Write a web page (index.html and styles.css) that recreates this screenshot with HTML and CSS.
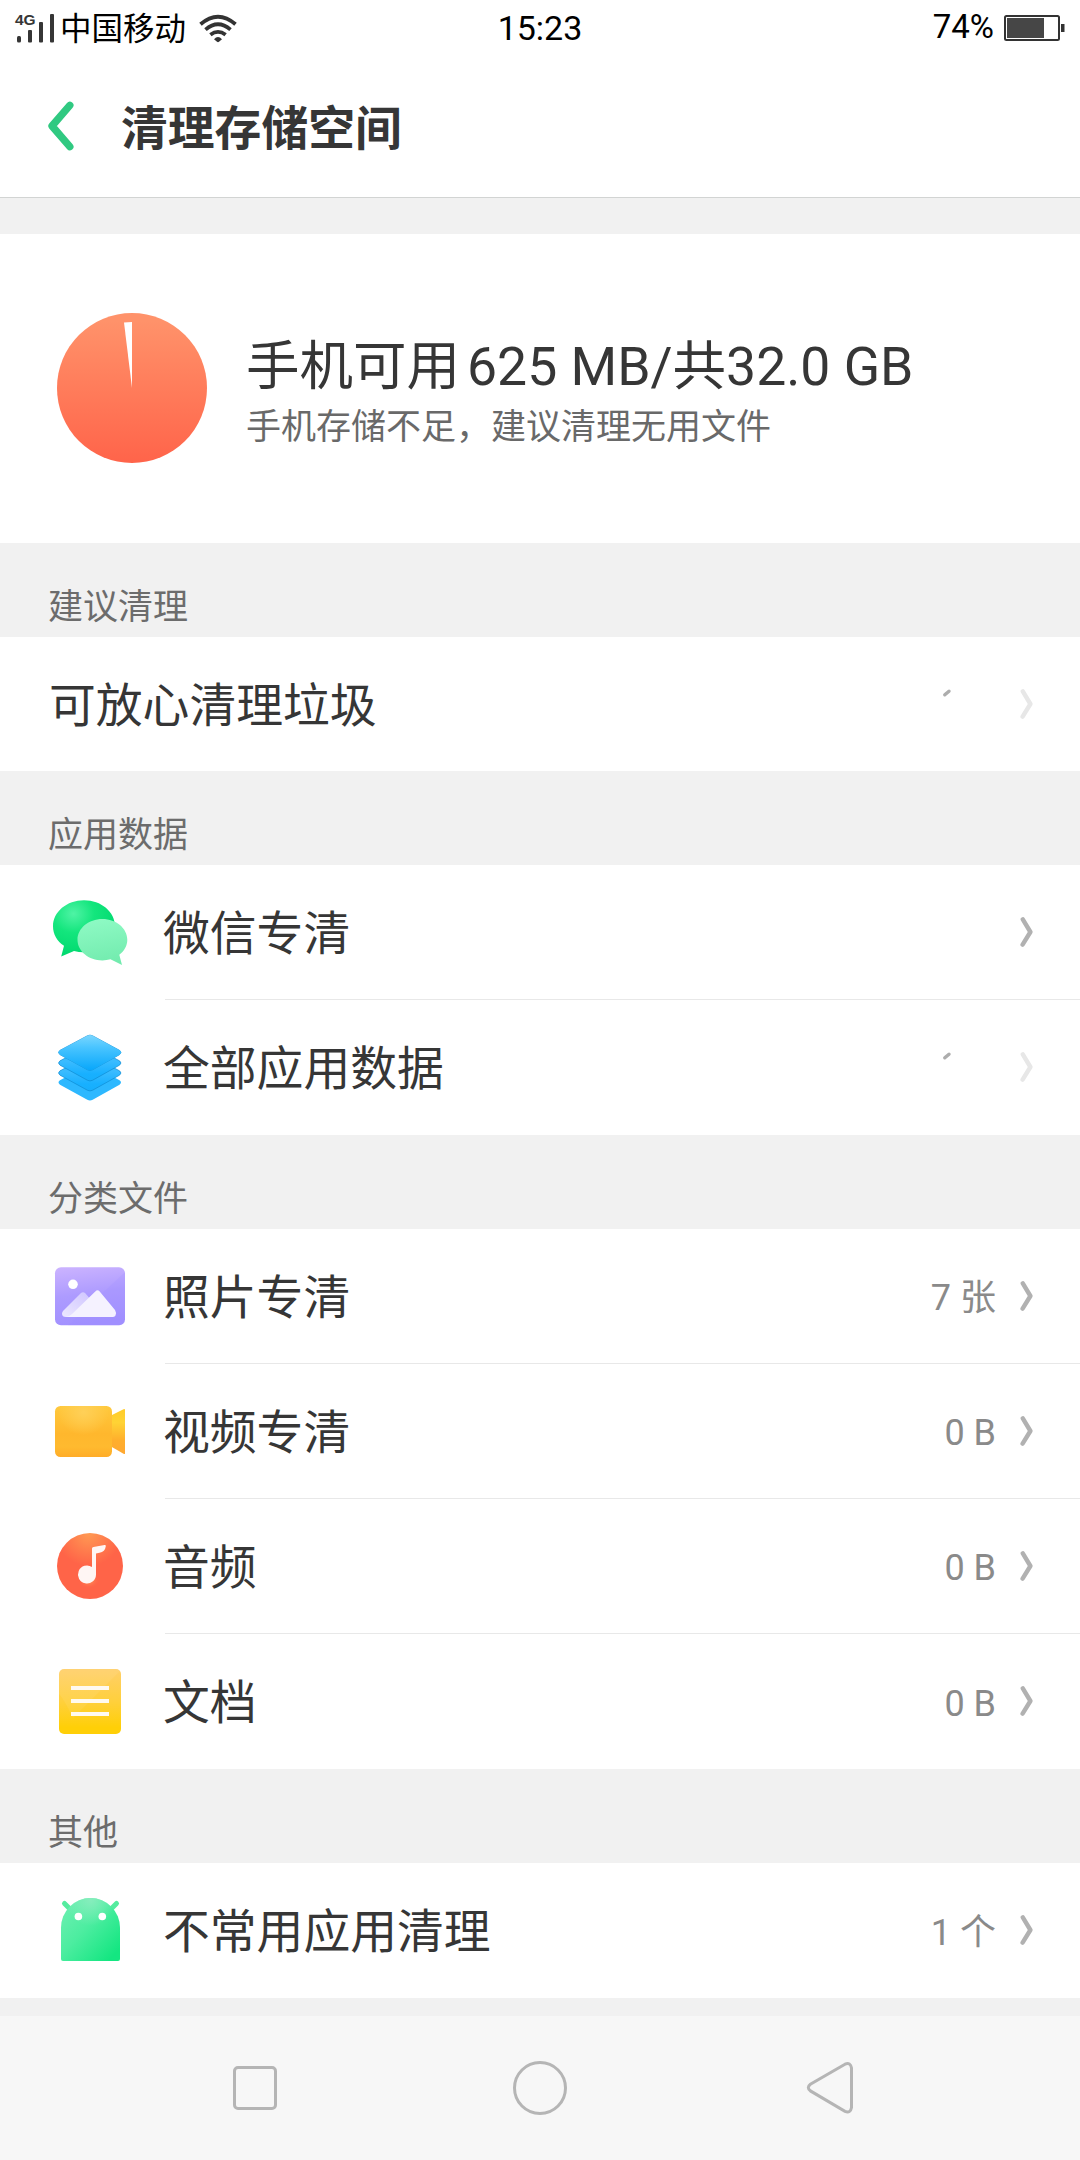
FILE: index.html
```html
<!DOCTYPE html>
<html lang="zh-CN">
<head>
<meta charset="utf-8">
<title>清理存储空间</title>
<link rel="stylesheet" href="styles.css">
</head>
<body>
<svg class="defs" width="0" height="0" aria-hidden="true">
  <defs>
    <symbol id="chevron" viewBox="0 0 14 32"><path d="M2.8 3.3 10.4 16 2.6 28.7" fill="none" stroke="currentColor" stroke-width="4.4" stroke-linecap="round" stroke-linejoin="round"/></symbol>
    <symbol id="tick" viewBox="0 0 12 12"><path d="M3.8 7.8 8 4.2" fill="none" stroke="#adadad" stroke-width="3.4" stroke-linecap="round"/></symbol>
  </defs>
</svg>
<div class="screen">
  <header class="top">
    <div class="status">
      <div class="status-left">
        <svg class="signal" viewBox="14 8 42 38"><g fill="#363636"><text class="net" x="15" y="24">4G</text><rect x="17" y="35" width="4" height="6.500" rx="1.5"/><rect x="28" y="29" width="4" height="12.500" rx="1"/><rect x="39" y="21" width="4" height="20.500" rx="1"/><rect x="50" y="13" width="4" height="28.500" rx="1"/></g></svg>
        <span class="carrier">中国移动</span>
        <svg class="wifi" viewBox="198 10 40 32"><g fill="none" stroke="#333" stroke-width="3.8"><path d="M200.500 22.300Q218 7.200 235.500 22.300"/><path d="M205.500 27.600Q218 17 230.500 27.600"/><path d="M210.400 32.800Q218 27 225.600 32.800"/></g><path d="M214 37.200Q218 33 222 37.200L219 39.800Q218 40.600 217 39.800Z" fill="#333"/></svg>
      </div>
      <span class="time">15:23</span>
      <div class="status-right">
        <span class="percent">74%</span>
        <svg class="battery" viewBox="1003 13 62 28"><rect x="1005" y="15" width="54" height="24" rx="1.5" fill="none" stroke="#333" stroke-width="2"/><rect x="1007" y="17" width="37" height="20" fill="#464646"/><rect x="1061" y="23" width="3.5" height="8" fill="#333"/></svg>
      </div>
    </div>
    <div class="bar">
      <svg class="back" viewBox="46 98 30 56"><path d="M69.8 105.3 52 126 69.8 146.7" fill="none" stroke="#30c981" stroke-width="7.4" stroke-linecap="round" stroke-linejoin="round"/></svg>
      <h1 class="title">清理存储空间</h1>
    </div>
  </header>

  <section class="summary">
    <svg class="pie" viewBox="0 0 150 150"><defs><linearGradient id="gp" x2="0" y2="1"><stop offset=".05" stop-color="#ff926a"/><stop offset="1" stop-color="#ff644a"/></linearGradient></defs><circle cx="75" cy="75" r="75" fill="url(#gp)"/><path d="M75 75V9Q71 9 67 9.6Z" fill="#fff"/></svg>
    <div class="summary-text">
      <p class="free">手机可用<span class="gap"></span>625 MB/共32.0 GB</p>
      <p class="hint">手机存储不足，建议清理无用文件</p>
    </div>
  </section>

  <h2 class="label">建议清理</h2>
  <ul class="list">
    <li class="row row-single">
      <div class="cell"><span class="name">可放心清理垃圾</span><svg class="tick"><use href="#tick"/></svg><svg class="chevron off"><use href="#chevron"/></svg></div>
    </li>
  </ul>

  <h2 class="label">应用数据</h2>
  <ul class="list">
    <li class="row">
      <svg class="icon" viewBox="50 0 80 135"><defs><radialGradient id="w1" cx=".33" cy=".24" r=".75"><stop offset="0" stop-color="#4ff3a5"/><stop offset=".45" stop-color="#13e67d"/><stop offset="1" stop-color="#00d96f"/></radialGradient><linearGradient id="w2" x1=".3" x2=".5" y2="1"><stop offset="0" stop-color="#8efac4"/><stop offset="1" stop-color="#72ebae"/></linearGradient></defs><path d="M84 35.300c17.200 0 31 11.500 31 26s-13.800 26-31 26q-5.500 0-10-1.200L61.200 91.500 64 80.800C57 76.300 53 69.300 53 61.300c0-14.500 13.800-26 31-26Z" fill="url(#w1)"/><path d="M102.400 54c13.800 0 24.900 9.300 24.900 20.700 0 6-3 11.300-8 15L122 100l-11.500-5.700q-4 1.100-8.100 1.100c-13.800 0-24.900-9.300-24.900-20.700S88.600 54 102.400 54Z" fill="url(#w2)"/></svg>
      <div class="cell"><span class="name">微信专清</span><svg class="chevron"><use href="#chevron"/></svg></div>
    </li>
    <li class="row">
      <svg class="icon" viewBox="50 0 80 135"><defs><linearGradient id="d1" x2="0" y2="1"><stop offset="0" stop-color="#7ad6fe"/><stop offset=".35" stop-color="#49c4ff"/><stop offset="1" stop-color="#08a7fb"/></linearGradient><linearGradient id="d2" x2="0" y2="1"><stop offset=".45" stop-color="#3abbff"/><stop offset=".8" stop-color="#18b0ff"/><stop offset="1" stop-color="#16aefc"/></linearGradient><path id="dia" d="M87.300 35.800Q90 34.300 92.700 35.800L119.500 50.300Q122.500 52.500 119.500 54.700L92.700 69.700Q90 71.200 87.300 69.700L60 54.700Q57 52.500 60 50.300Z"/></defs><use href="#dia" y="30" fill="#2db8ff"/><g stroke="#0b86cc" stroke-opacity=".6" stroke-width="1"><use href="#dia" y="20.500" fill="url(#d2)"/><use href="#dia" y="10.500" fill="url(#d2)"/><use href="#dia" fill="#35b9ff"/></g><use href="#dia" fill="url(#d1)"/></svg>
      <div class="cell"><span class="name">全部应用数据</span><svg class="tick"><use href="#tick"/></svg><svg class="chevron off"><use href="#chevron"/></svg></div>
    </li>
  </ul>

  <h2 class="label">分类文件</h2>
  <ul class="list">
    <li class="row">
      <svg class="icon" viewBox="50 0 80 135"><defs><linearGradient id="p1" x1=".1" x2=".25" y2="1"><stop offset="0" stop-color="#cbb3ff"/><stop offset=".5" stop-color="#ad9bff"/><stop offset="1" stop-color="#a291ff"/></linearGradient><linearGradient id="p2" x1="1" x2="0" y2="1"><stop offset="0" stop-color="#cfc5ff"/><stop offset="1" stop-color="#ece7ff"/></linearGradient></defs><rect x="55" y="38.300" width="70" height="58" rx="6" fill="url(#p1)"/><path d="M125 43V90.300Q125 96.300 119 96.300H68Z" fill="#9c8bff" opacity=".18"/><circle cx="73" cy="55.300" r="4.800" fill="#fff"/><path d="M80.500 64.500Q83 62 85.500 64.500L91 71 70 88H66Q62 88 62 84.500 62 83 63.500 81.500Z" fill="url(#p2)"/><path d="M95.300 62.500Q97.500 60 99.700 62.500L115 81Q116.800 84 115.500 86.500 114.500 88 112.500 88H66Q69.500 87.500 72 85Z" fill="#f5f2ff"/></svg>
      <div class="cell"><span class="name">照片专清</span><span class="value">7 张</span><svg class="chevron"><use href="#chevron"/></svg></div>
    </li>
    <li class="row">
      <svg class="icon" viewBox="50 0 80 135"><defs><linearGradient id="v1" x2="0" y2="1"><stop offset="0" stop-color="#ffc93d"/><stop offset=".55" stop-color="#ffb72d"/><stop offset=".8" stop-color="#ffba2f"/><stop offset="1" stop-color="#ffac28"/></linearGradient><radialGradient id="v3" cx=".5" cy=".12" r=".45"><stop offset="0" stop-color="#ffd058"/><stop offset="1" stop-color="#ffd058" stop-opacity="0"/></radialGradient><linearGradient id="v2" x2="0" y2="1"><stop offset="0" stop-color="#ffcc29"/><stop offset=".3" stop-color="#ffd335"/><stop offset=".7" stop-color="#ffae2c"/><stop offset="1" stop-color="#ffa832"/></linearGradient></defs><path d="M111 51.500 123.500 45.200Q125 44.500 125 45.500V89.500Q125 90.500 123.500 89.700L111 82.500Z" fill="url(#v2)"/><rect x="55" y="42" width="57" height="51" rx="5.500" fill="url(#v1)"/><rect x="55" y="42" width="57" height="51" rx="5.500" fill="url(#v3)"/></svg>
      <div class="cell"><span class="name">视频专清</span><span class="value">0 B</span><svg class="chevron"><use href="#chevron"/></svg></div>
    </li>
    <li class="row">
      <svg class="icon" viewBox="50 0 80 135"><defs><radialGradient id="a1" cx=".48" cy="0" r=".5"><stop offset="0" stop-color="#ff9a53"/><stop offset="1" stop-color="#ff6448"/></radialGradient><radialGradient id="a2"><stop offset="0" stop-color="#ffa060"/><stop offset="1" stop-color="#ff6448" stop-opacity="0"/></radialGradient></defs><circle cx="90" cy="67" r="33" fill="url(#a1)"/><ellipse cx="89" cy="81.500" rx="10.500" ry="8" fill="url(#a2)"/><path d="M92 69.500V49.500Q92 48 93.500 47.900L104.500 46.100Q106 45.900 105.800 47.200 105 52.800 99.500 53.800L96 54.400V75.700A9 9 0 1 1 92 68Z" fill="#fff6f4"/></svg>
      <div class="cell"><span class="name">音频</span><span class="value">0 B</span><svg class="chevron"><use href="#chevron"/></svg></div>
    </li>
    <li class="row">
      <svg class="icon" viewBox="50 0 80 135"><defs><linearGradient id="o1" x2="0" y2="1"><stop offset="0" stop-color="#ffcf69"/><stop offset=".5" stop-color="#ffd03c"/><stop offset=".9" stop-color="#ffcf07"/></linearGradient></defs><rect x="59" y="35" width="62" height="65" rx="5" fill="url(#o1)"/><path d="M64 35H116Q119 35 120 37L73 84Q64 65 59 60V40Q59 35 64 35Z" fill="#fff" opacity=".07"/><path d="M71 54H109M71 67H109M71 80H109" stroke="#fffaf0" stroke-width="4" fill="none"/></svg>
      <div class="cell"><span class="name">文档</span><span class="value">0 B</span><svg class="chevron"><use href="#chevron"/></svg></div>
    </li>
  </ul>

  <h2 class="label">其他</h2>
  <ul class="list">
    <li class="row">
      <svg class="icon" viewBox="50 0 80 135"><defs><linearGradient id="r1" x2="1" y2="1"><stop offset=".05" stop-color="#6eefb2"/><stop offset=".45" stop-color="#4ceda0"/><stop offset=".9" stop-color="#14e681"/></linearGradient><radialGradient id="r2" cx=".5" cy=".02" r=".42"><stop offset="0" stop-color="#87edbd"/><stop offset="1" stop-color="#87edbd" stop-opacity="0"/></radialGradient></defs><path d="M64.500 40.500 72 48M116.500 40.500 109 48" stroke="#55ec9f" stroke-width="5" stroke-linecap="round"/><path d="M61 64.500a29.500 29.500 0 0 1 59 0V96q0 2-2 2H63q-2 0-2-2Z" fill="url(#r1)"/><path d="M61 64.500a29.500 29.500 0 0 1 59 0V96q0 2-2 2H63q-2 0-2-2Z" fill="url(#r2)"/><circle cx="78.400" cy="53.500" r="3.800" fill="#fff"/><circle cx="102.300" cy="53.500" r="3.800" fill="#fff"/></svg>
      <div class="cell"><span class="name">不常用应用清理</span><span class="value">1 个</span><svg class="chevron"><use href="#chevron"/></svg></div>
    </li>
  </ul>

  <nav class="nav">
    <svg viewBox="0 0 60 60"><rect x="9.500" y="9.500" width="41" height="41" rx="3.500"/></svg>
    <svg viewBox="0 0 60 60"><circle cx="30" cy="30" r="25.500"/></svg>
    <svg class="nav-back" viewBox="0 0 60 60"><path d="M44 6.200 9.400 26.200Q5.200 29.500 9.400 32.900L44 53.300Q49.500 55.500 50.500 49.500V10Q49.500 4 44 6.200Z"/></svg>
  </nav>
</div>
</body>
</html>
```
FILE: styles.css
```css
* { box-sizing: border-box; margin: 0; padding: 0; }

body {
  width: 1080px;
  background: #f1f1f1;
  color: #363636;
  font-family: Roboto, "Noto Sans CJK SC", sans-serif;
}

.defs { display: block; }

.screen {
  display: flex;
  flex-direction: column;
  height: 2160px;
}

svg { display: block; flex: none; }

/* Status bar and title */
.top {
  height: 198px;
  margin-bottom: 36px;
  background: #fff;
  border-bottom: 1px solid #d2d4d3;
}

.status {
  display: grid;
  grid-template-columns: 1fr auto 1fr;
  align-items: center;
  height: 56px;
  padding: 0 14px 0 14px;
  color: #000;
  line-height: 56px;
}

.status-left, .status-right { display: flex; align-items: center; height: 54px; }
.status-right { justify-content: flex-end; gap: 9px; padding-right: 1px; }
.signal { width: 42px; height: 38px; }
.net { font: bold 15.5px "Liberation Sans", sans-serif; }
.carrier { margin-left: 4px; padding-top: 3px; font-size: 31.5px; }
.wifi { width: 40px; height: 32px; margin-left: 12px; }
.time { font-size: 34px; line-height: 56px; height: 56px; }
.percent { font-size: 33px; height: 58px; }
.battery { width: 62px; height: 28px; }

.bar {
  display: flex;
  align-items: center;
  height: 140px;
  padding-left: 46px;
}
.back { width: 30px; height: 56px; }
.title {
  margin-left: 45px;
  padding-top: 5px;
  font-size: 46.8px;
  font-weight: 700;
  line-height: 60px;
}

/* Storage summary */
.summary {
  display: flex;
  align-items: center;
  height: 309px;
  padding: 0 0 1px 57px;
  background: #fff;
}
.pie { width: 150px; height: 150px; }
.summary-text { margin-left: 39px; padding-top: 16px; white-space: nowrap; }
.free { font-size: 53.5px; line-height: 62px; }
.gap { display: inline-block; width: 7px; }
.hint { color: #696969; font-size: 35px; line-height: 59px; }

/* Lists */
.label {
  height: 94px;
  padding: 40px 0 0 48px;
  color: #6c6c6c;
  font-size: 35px;
  font-weight: 400;
  line-height: 50px;
}

.list { list-style: none; background: #fff; }
.row { display: flex; height: 135px; padding-left: 50px; }
.row-single { height: 134px; padding-left: 49px; }
.icon { width: 80px; height: 135px; margin-right: 35px; overflow: visible; }
.cell {
  display: flex;
  flex: 1;
  align-items: center;
  padding-right: 46px;
}
.row:not(:last-child) .cell { border-bottom: 1px solid #e8e8e8; }
.row .icon + .cell .name { margin-left: -2px; }
.name { flex: 1; padding-top: 3px; font-size: 46.8px; line-height: 60px; }
.value { padding-top: 4px; color: #8a8a8a; font-size: 36px; line-height: 50px; }
.tick { width: 12px; height: 12px; margin: 0 67px 23px 0; }
.chevron { width: 14px; height: 32px; margin: 0 0 1px 24px; color: #b1b1b1; }
.tick + .chevron { margin-left: 0; }
.off { color: #e7e7e7; }

/* Navigation keys */
.nav {
  display: flex;
  align-items: center;
  gap: 225px;
  height: 144px;
  margin-top: 18px;
  padding-left: 225px;
  background: #f7f7f7;
}
.nav svg {
  width: 60px;
  height: 60px;
  fill: none;
  stroke: #b5b5b5;
  stroke-width: 3;
}
.nav .nav-back { margin-left: 6px; }
```
